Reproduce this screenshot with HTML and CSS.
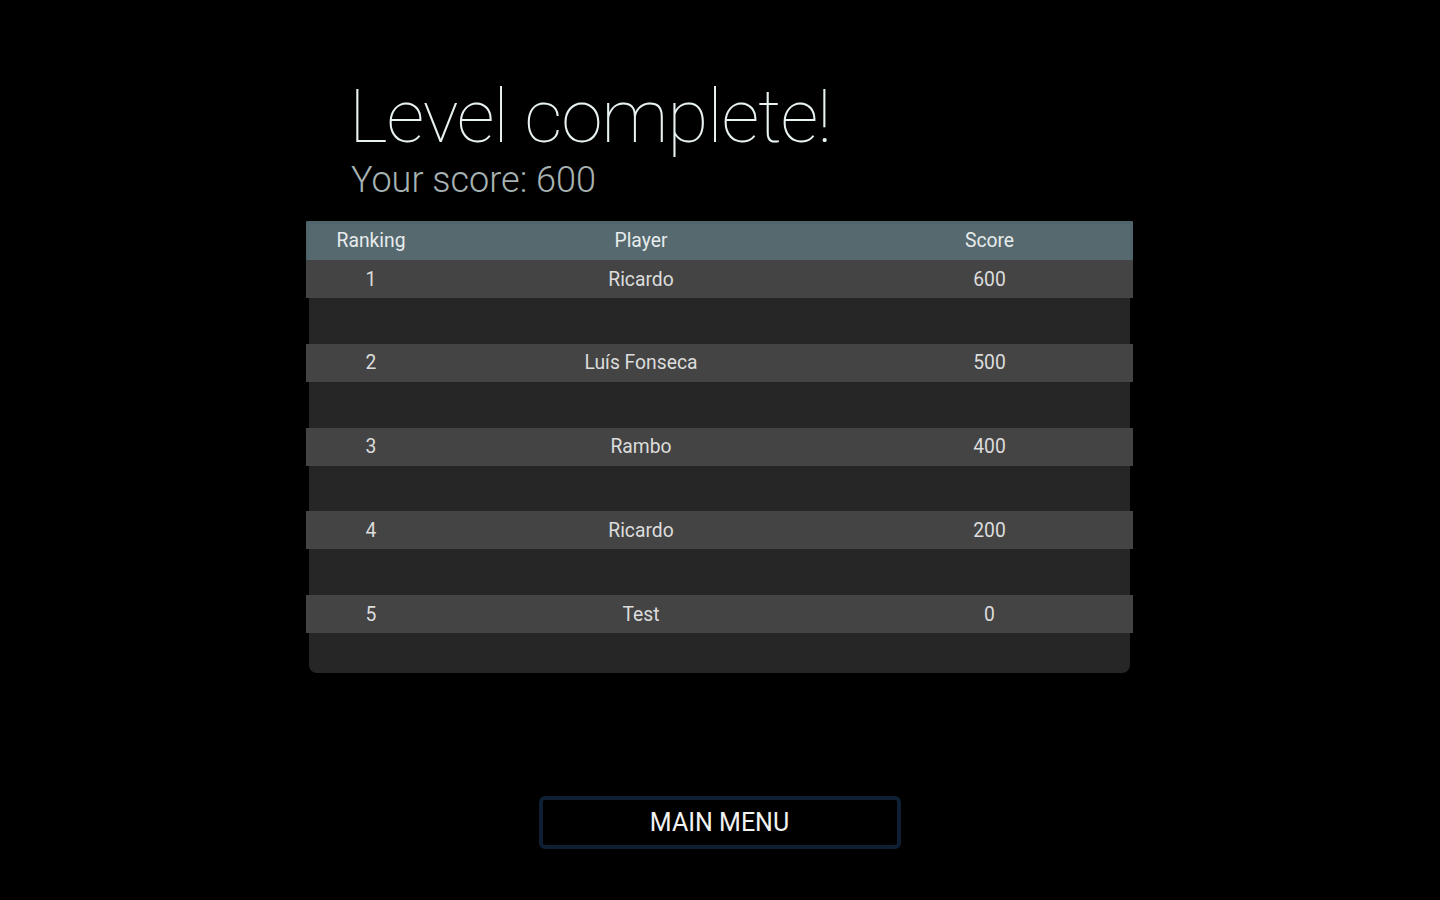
FILE: index.html
```html
<!DOCTYPE html>
<html>
<head>
<meta charset="utf-8">
<link rel="stylesheet" href="styles.css">
</head>
<body>
<div class="screen">
  <div class="heading">
    <h1 class="title">Level complete!</h1>
    <div class="subtitle">Your score: 600</div>
  </div>
  <div class="board">
    <div class="row head">
      <div>Ranking</div><div>Player</div><div>Score</div>
    </div>
    <div class="row"><div>1</div><div>Ricardo</div><div>600</div></div>
    <div class="row"><div>2</div><div>Luís Fonseca</div><div>500</div></div>
    <div class="row"><div>3</div><div>Rambo</div><div>400</div></div>
    <div class="row"><div>4</div><div>Ricardo</div><div>200</div></div>
    <div class="row"><div>5</div><div>Test</div><div>0</div></div>
  </div>
  <div class="actions">
    <button class="menu-btn">MAIN MENU</button>
  </div>
</div>
</body>
</html>
```
FILE: styles.css
```css
html, body {
  margin: 0;
  padding: 0;
  background: #000;
  height: 100%;
}
body {
  font-family: Roboto, "Liberation Sans", sans-serif;
  color: #e6e6e6;
}
.screen {
  width: 1440px;
  height: 900px;
  display: flex;
  flex-direction: column;
}
.heading {
  padding: 79px 0 22px 349px;
}
.title {
  margin: 0;
  font-size: 75px;
  font-weight: 100;
  line-height: 75px;
  color: #e8f2f2;
  letter-spacing: -1.2px;
}
.subtitle {
  font-size: 36px;
  font-weight: 300;
  line-height: 36px;
  color: #a7b3b3;
  margin-top: 8px;
  padding-left: 2px;
  height: 37px;
}
.board {
  margin-left: 309px;
  width: 821px;
  height: 452px;
  flex: none;
  background: #262626;
  border-radius: 8px;
  box-sizing: border-box;
}
.row {
  display: grid;
  grid-template-columns: 130px 410px 1fr;
  margin: 0 -3px 45.75px;
  height: 38px;
  align-items: center;
  background: #444444;
  font-size: 19.3px;
  color: #dcdcdc;
}
.row > div {
  text-align: center;
}
.row.head {
  height: 39px;
  margin-bottom: 0;
  background: #55696f;
  border-radius: 2px 2px 0 0;
  box-shadow: inset 3px 3px 0 #4f646b, inset -3px 0 0 #4f646b;
  color: #e8ecec;
}
.actions {
  display: flex;
  justify-content: center;
  padding-top: 123px;
}
.menu-btn {
  width: 362px;
  height: 53px;
  background: #000;
  border: 4px solid #0e1f33;
  border-radius: 6px;
  color: #f2f2f2;
  font-family: Roboto, "Liberation Sans", sans-serif;
  font-size: 25px;
  font-weight: 400;
  padding: 0;
  margin-left: -1px;
}
```
